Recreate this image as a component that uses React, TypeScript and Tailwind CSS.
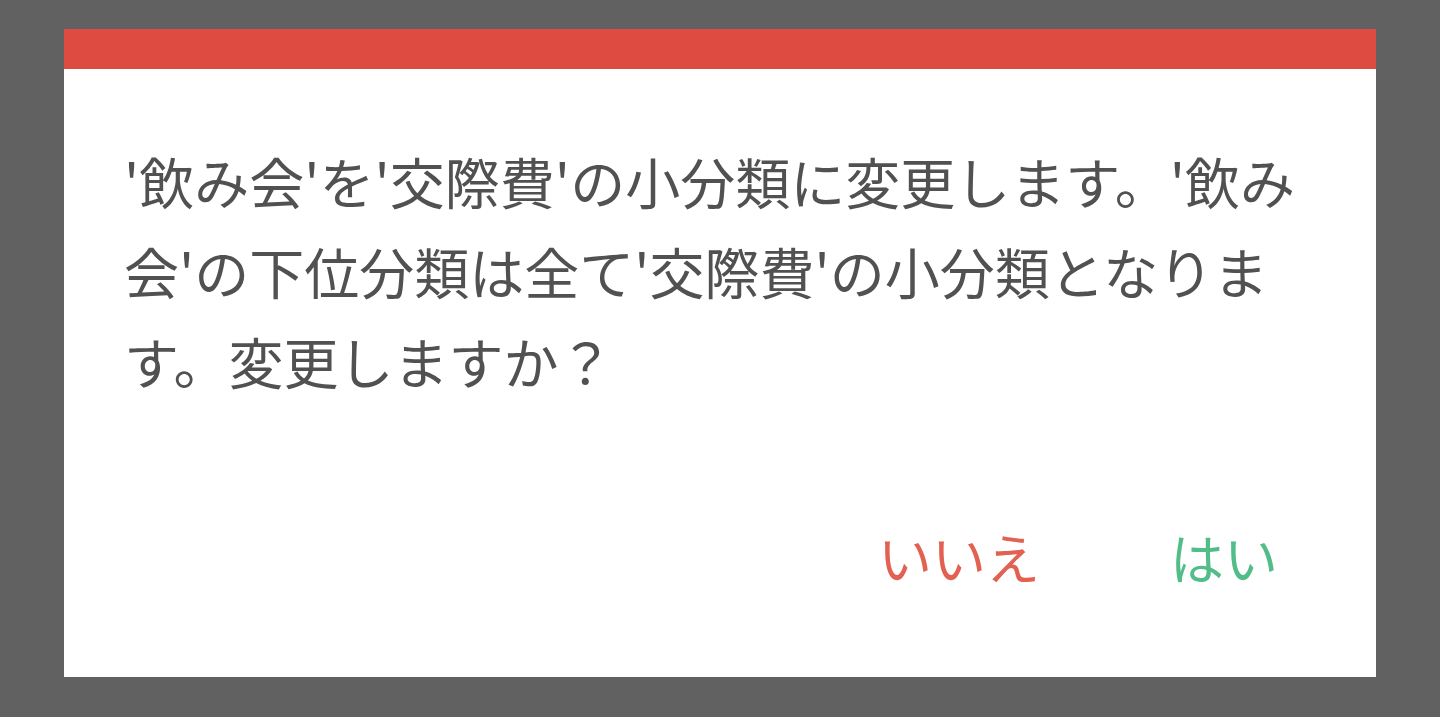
import React from 'react';

const font = { fontFamily: '"Noto Sans CJK JP", "Noto Sans", sans-serif' };

export default function App() {
  return (
    <div className="min-h-[717px] w-full bg-[#616161] px-[64px] pt-[29px] pb-[40px]" style={font}>
      <div className="flex h-[648px] flex-col bg-white">
        <div className="h-[40px] bg-[#de4c41]" />
        <p className="pl-[60px] pr-[60px] pt-[66px] text-[55px] leading-[90px] text-[#515151]">
          '飲み会'を'交際費'の小分類に変更します。'飲み会'の下位分類は全て'交際費'の小分類となります。変更しますか？
        </p>
        <div className="mt-[107px] flex justify-end gap-[130px] pr-[98px]">
          <button className="text-[54px] leading-[90px] text-[#e26152]">いいえ</button>
          <button className="text-[54px] leading-[90px] text-[#52bd88]">はい</button>
        </div>
      </div>
    </div>
  );
}
